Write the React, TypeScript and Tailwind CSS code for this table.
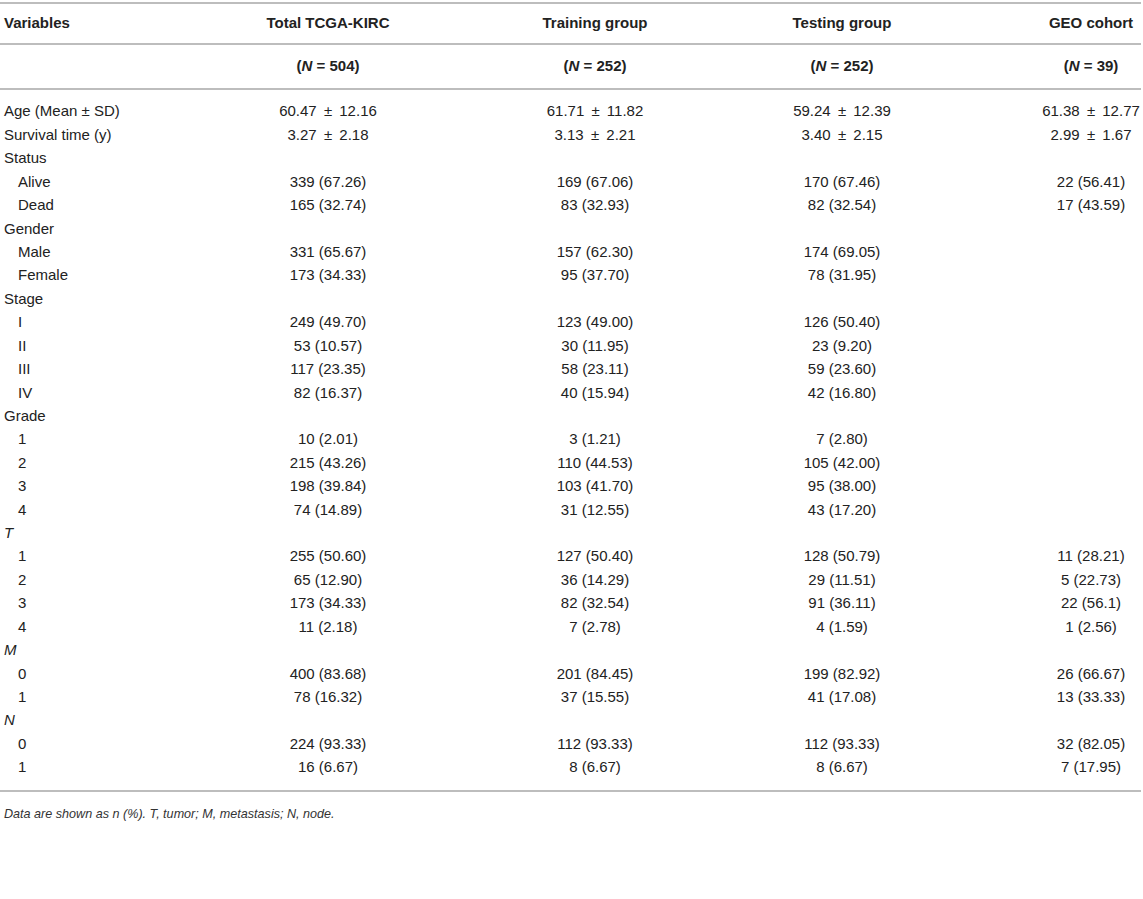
import React from "react";

type Row = { label: string; sub?: boolean; italic?: boolean; vals?: string[] };

const rows: Row[] = [
  { label: "Age (Mean ± SD)", vals: ["60.47 ± 12.16", "61.71 ± 11.82", "59.24 ± 12.39", "61.38 ± 12.77"] },
  { label: "Survival time (y)", vals: ["3.27 ± 2.18", "3.13 ± 2.21", "3.40 ± 2.15", "2.99 ± 1.67"] },
  { label: "Status" },
  { label: "Alive", sub: true, vals: ["339 (67.26)", "169 (67.06)", "170 (67.46)", "22 (56.41)"] },
  { label: "Dead", sub: true, vals: ["165 (32.74)", "83 (32.93)", "82 (32.54)", "17 (43.59)"] },
  { label: "Gender" },
  { label: "Male", sub: true, vals: ["331 (65.67)", "157 (62.30)", "174 (69.05)", ""] },
  { label: "Female", sub: true, vals: ["173 (34.33)", "95 (37.70)", "78 (31.95)", ""] },
  { label: "Stage" },
  { label: "I", sub: true, vals: ["249 (49.70)", "123 (49.00)", "126 (50.40)", ""] },
  { label: "II", sub: true, vals: ["53 (10.57)", "30 (11.95)", "23 (9.20)", ""] },
  { label: "III", sub: true, vals: ["117 (23.35)", "58 (23.11)", "59 (23.60)", ""] },
  { label: "IV", sub: true, vals: ["82 (16.37)", "40 (15.94)", "42 (16.80)", ""] },
  { label: "Grade" },
  { label: "1", sub: true, vals: ["10 (2.01)", "3 (1.21)", "7 (2.80)", ""] },
  { label: "2", sub: true, vals: ["215 (43.26)", "110 (44.53)", "105 (42.00)", ""] },
  { label: "3", sub: true, vals: ["198 (39.84)", "103 (41.70)", "95 (38.00)", ""] },
  { label: "4", sub: true, vals: ["74 (14.89)", "31 (12.55)", "43 (17.20)", ""] },
  { label: "T", italic: true },
  { label: "1", sub: true, vals: ["255 (50.60)", "127 (50.40)", "128 (50.79)", "11 (28.21)"] },
  { label: "2", sub: true, vals: ["65 (12.90)", "36 (14.29)", "29 (11.51)", "5 (22.73)"] },
  { label: "3", sub: true, vals: ["173 (34.33)", "82 (32.54)", "91 (36.11)", "22 (56.1)"] },
  { label: "4", sub: true, vals: ["11 (2.18)", "7 (2.78)", "4 (1.59)", "1 (2.56)"] },
  { label: "M", italic: true },
  { label: "0", sub: true, vals: ["400 (83.68)", "201 (84.45)", "199 (82.92)", "26 (66.67)"] },
  { label: "1", sub: true, vals: ["78 (16.32)", "37 (15.55)", "41 (17.08)", "13 (33.33)"] },
  { label: "N", italic: true },
  { label: "0", sub: true, vals: ["224 (93.33)", "112 (93.33)", "112 (93.33)", "32 (82.05)"] },
  { label: "1", sub: true, vals: ["16 (6.67)", "8 (6.67)", "8 (6.67)", "7 (17.95)"] },
];

const grid = "grid grid-cols-[200px_256px_278px_216px_1fr] items-center";
const lastCol = "pl-[90px] pr-[1px] text-center";

// a little more air round ± in the values, evenly on both sides
function fmt(v: string) {
  return v.replace(" ± ", " \u2009±\u2009 ");
}

function Rule() {
  return <div className="h-[2px] w-[1141px] bg-[#bdbdbd]" />;
}

export default function App() {
  return (
    <div
      className="bg-white w-[1143px] min-h-[899px] pt-[2px] text-[15px] text-[#222]"
      style={{ fontFamily: '"Liberation Sans", Arial, sans-serif' }}
    >
      <Rule />
      <div className={`${grid} h-[39px] font-bold`}>
        <div className="pl-1">Variables</div>
        <div className="text-center">Total TCGA-KIRC</div>
        <div className="text-center">Training group</div>
        <div className="text-center">Testing group</div>
        <div className={lastCol}>GEO cohort</div>
      </div>
      <Rule />
      <div className={`${grid} h-[43px] font-bold`}>
        <div />
        <div className="text-center">(<i>N</i> = 504)</div>
        <div className="text-center">(<i>N</i> = 252)</div>
        <div className="text-center">(<i>N</i> = 252)</div>
        <div className={lastCol}>(<i>N</i> = 39)</div>
      </div>
      <Rule />
      <div className="pt-[10px] pb-[11px]">
        {rows.map((r, i) => (
          <div key={i} className={`${grid} h-[23.43px]`}>
            <div className={`${r.sub ? "pl-[18px]" : "pl-1"} ${r.italic ? "italic" : ""}`}>{r.label}</div>
            {(r.vals ?? ["", "", "", ""]).map((v, j) => (
              <div key={j} className={j === 3 ? lastCol : "text-center"}>
                {fmt(v)}
              </div>
            ))}
          </div>
        ))}
      </div>
      <Rule />
      <div className="pl-1 pt-[13px] text-[12.6px] italic text-[#333]">
        Data are shown as n (%). T, tumor; M, metastasis; N, node.
      </div>
    </div>
  );
}
